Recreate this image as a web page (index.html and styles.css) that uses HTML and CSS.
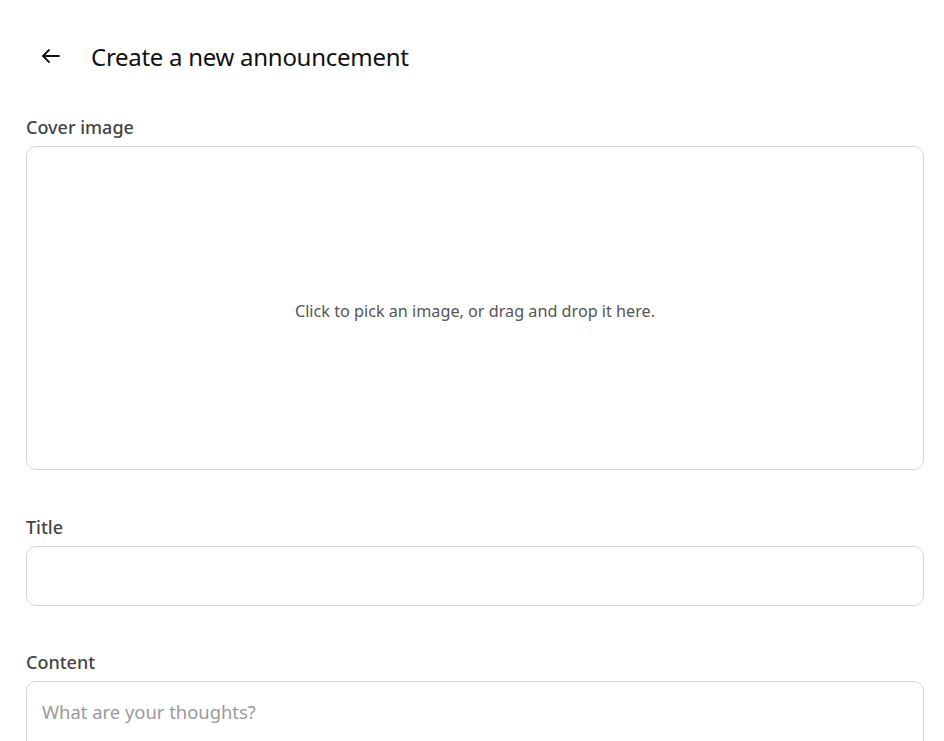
FILE: index.html
```html
<!DOCTYPE html>
<html>
<head>
<meta charset="utf-8">
<link rel="stylesheet" href="styles.css">
</head>
<body>
<div class="page">
  <header class="header">
    <button class="back" aria-label="Back">
      <svg width="20" height="20" viewBox="0 0 20 20" fill="none" stroke="#111" stroke-width="1.8" stroke-linecap="round" stroke-linejoin="round"><path d="M18 10H2.5"/><path d="M8 4l-6 6 6 6"/></svg>
    </button>
    <h1 class="title">Create a new announcement</h1>
  </header>
  <div class="field">
    <label class="label">Cover image</label>
    <div class="dropzone">Click to pick an image, or drag and drop it here.</div>
  </div>
  <div class="field field-tight">
    <label class="label">Title</label>
    <input class="input" type="text">
  </div>
  <div class="field">
    <label class="label">Content</label>
    <textarea class="textarea" placeholder="What are your thoughts?"></textarea>
  </div>
</div>
</body>
</html>
```
FILE: styles.css
```css
html, body { margin: 0; padding: 0; background: #fff; }
body { font-family: "Noto Sans", "Open Sans", sans-serif; color: #111; overflow: hidden; }
.page { padding: 0 20px 0 26px; }
.header { display: flex; align-items: center; height: 114px; }
.back { border: 0; background: none; padding: 0; margin: 0 0 2px 15px; width: 20px; height: 20px; display: flex; align-items: center; justify-content: center; cursor: pointer; }
.title { margin: 0 0 2px 30px; font-size: 24px; font-weight: 400; color: #111; letter-spacing: -0.28px; }
.field { display: flex; flex-direction: column; margin-bottom: 44px; }
.field-tight { margin-bottom: 43px; }
.label { font-size: 18px; font-weight: 500; color: #444; padding-top: 1px; margin-bottom: 7px; line-height: 24px; }
.dropzone { height: 316px; padding-top: 6px; border: 1px solid #d6d6d6; border-radius: 10px; display: flex; align-items: center; justify-content: center; font-size: 16.2px; color: #555; }
.input { height: 58px; border: 1px solid #d6d6d6; border-radius: 10px; box-sizing: content-box; padding: 0 15px; font: inherit; }
.textarea { height: 120px; border: 1px solid #d6d6d6; border-radius: 10px; padding: 17px 15px; font: inherit; font-size: 18.4px; resize: none; }
.textarea::placeholder { color: #9a9a9a; }
```
